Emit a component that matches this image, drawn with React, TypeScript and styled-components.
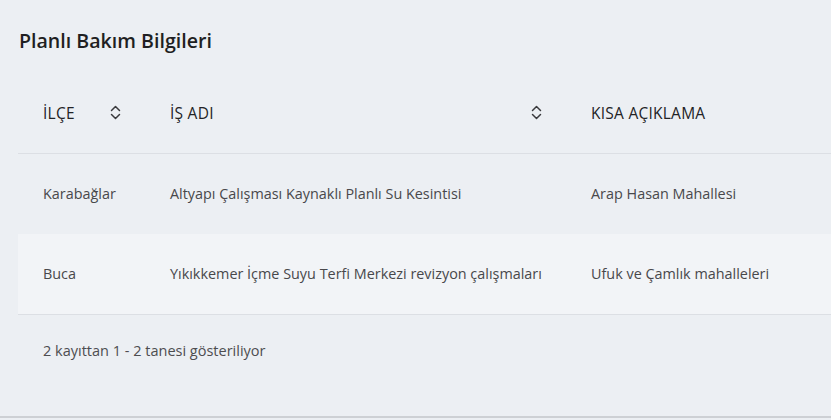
import React from "react";
import styled, { createGlobalStyle } from "styled-components";

const Global = createGlobalStyle`
  html, body { margin: 0; padding: 0; background: #eceff3; }
  body { font-family: "Open Sans", "Noto Sans", sans-serif; color: #333; }
`;

const Card = styled.section`
  width: 831px;
  height: 416px;
  background: #eceff3;
  border-bottom: 2px solid #cdd0d4;
  overflow: hidden;
  box-sizing: content-box;
`;

const Title = styled.h2`
  margin: 0;
  padding: 28px 0 0 19px;
  height: 73px;
  box-sizing: border-box;
  font-size: 19.6px;
  line-height: 26px;
  font-weight: 600;
  color: #1f1f22;
`;

const TableWrap = styled.div`
  padding-left: 18px;
`;

const Table = styled.table`
  border-collapse: collapse;
  table-layout: fixed;
  width: 850px;
`;

const HeadCell = styled.th<{ $w: number }>`
  width: ${(p) => p.$w}px;
  height: 80px;
  padding: 0 24px 0 25px;
  box-sizing: border-box;
  text-align: left;
  font-size: 15.5px;
  letter-spacing: 0.25px;
  font-weight: 500;
  color: #232326;
  border-bottom: 1px solid #dcdfe4;
  vertical-align: middle;
`;

const HeadInner = styled.div`
  display: flex;
  align-items: center;
  justify-content: space-between;
`;

const Row = styled.tr<{ $alt?: boolean }>`
  background: ${(p) => (p.$alt ? "#f2f4f7" : "transparent")};
  border-bottom: ${(p) => (p.$alt ? "1px solid #dcdfe4" : "none")};
`;

const Cell = styled.td`
  height: 80px;
  padding: 0 10px 0 25px;
  font-size: 14.4px;
  color: #48484b;
  white-space: nowrap;
  vertical-align: middle;
`;

const Footer = styled.div`
  padding: 27px 0 0 43px;
  font-size: 14.5px;
  line-height: 18px;
  color: #4d4d50;
`;

const SortIcon = () => (
  <svg width="11" height="15" viewBox="0 0 11 15" fill="none" stroke="#3a3a3d" strokeWidth="1.5" strokeLinecap="round" strokeLinejoin="round">
    <path d="M1.5 5.5 L5.5 1.5 L9.5 5.5" />
    <path d="M1.5 9.5 L5.5 13.5 L9.5 9.5" />
  </svg>
);

const rows = [
  { ilce: "Karabağlar", ad: "Altyapı Çalışması Kaynaklı Planlı Su Kesintisi", acik: "Arap Hasan Mahallesi" },
  { ilce: "Buca", ad: "Yıkıkkemer İçme Suyu Terfi Merkezi revizyon çalışmaları", acik: "Ufuk ve Çamlık mahalleleri" },
];

export default function App() {
  return (
    <>
      <Global />
      <Card>
        <Title>Planlı Bakım Bilgileri</Title>
        <TableWrap>
          <Table>
            <thead>
              <tr>
                <HeadCell $w={127}>
                  <HeadInner>
                    <span>İLÇE</span>
                    <SortIcon />
                  </HeadInner>
                </HeadCell>
                <HeadCell $w={421}>
                  <HeadInner>
                    <span>İŞ ADI</span>
                    <SortIcon />
                  </HeadInner>
                </HeadCell>
                <HeadCell $w={302}>
                  <HeadInner>
                    <span>KISA AÇIKLAMA</span>
                  </HeadInner>
                </HeadCell>
              </tr>
            </thead>
            <tbody>
              {rows.map((r, i) => (
                <Row key={r.ilce} $alt={i === 1}>
                  <Cell>{r.ilce}</Cell>
                  <Cell>{r.ad}</Cell>
                  <Cell>{r.acik}</Cell>
                </Row>
              ))}
            </tbody>
          </Table>
        </TableWrap>
        <Footer>2 kayıttan 1 - 2 tanesi gösteriliyor</Footer>
      </Card>
    </>
  );
}
